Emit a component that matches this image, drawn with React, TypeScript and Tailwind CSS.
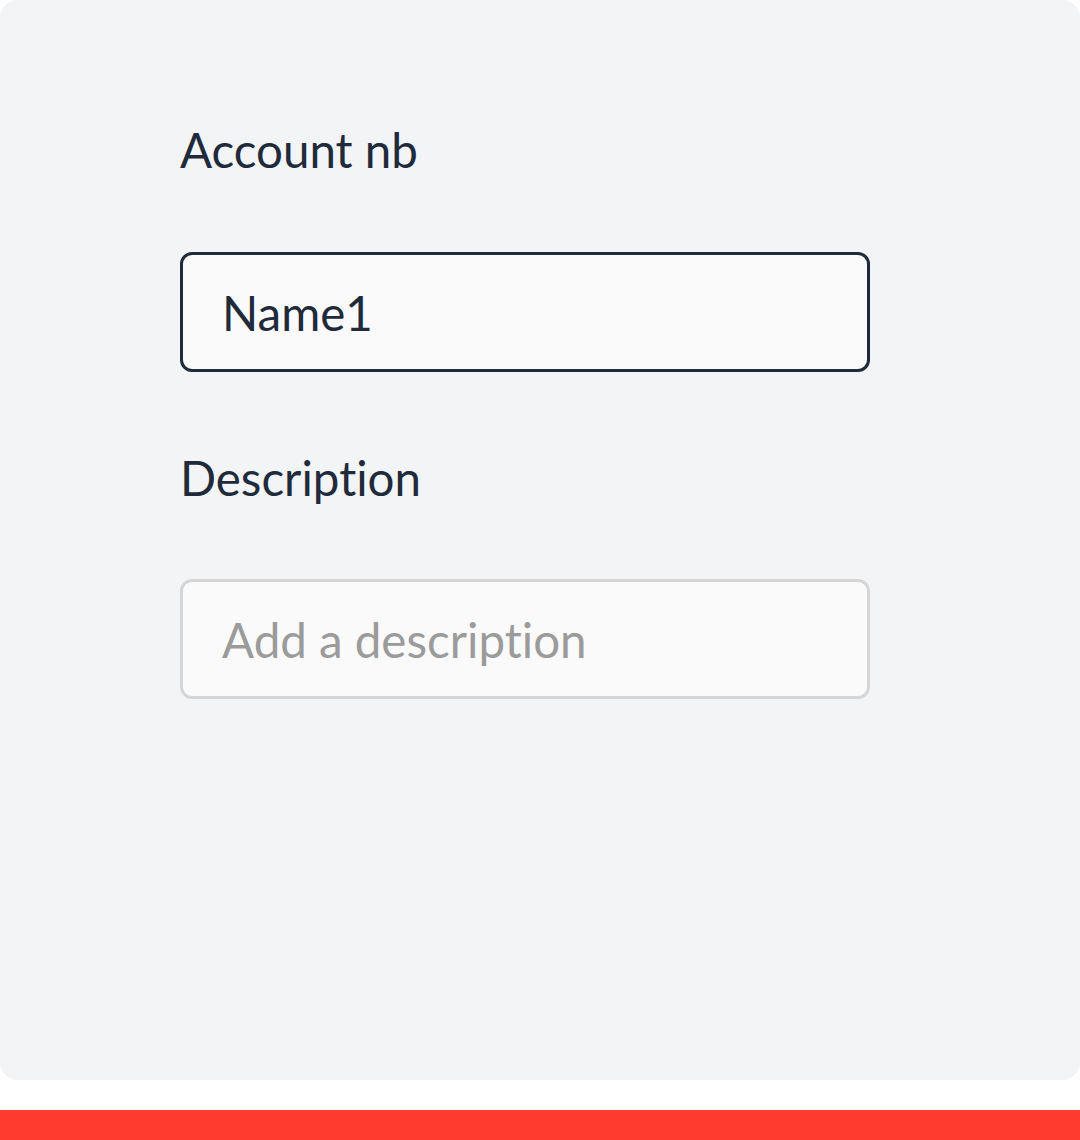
import React from "react";

const font = {
    fontFamily: "Lato, 'Noto Sans', sans-serif",
    fontVariantLigatures: "none",
};

// zero-width non-joiner keeps Lato from joining "ti"
const zwnj = "\u200C";

export default function App() {
    return (
        <div className="w-[1080px] h-[1140px] bg-white flex flex-col" style={font}>
            {/* Form panel */}
            <div className="h-[1080px] bg-[#f3f4f6] rounded-[18px] pl-[180px] pr-[210px] pt-[120px] flex flex-col">
                <label className="text-[47.5px] leading-[60px] text-[#1f2b3b]">Account nb</label>
                <input
                    className="mt-[72px] h-[120px] w-[690px] rounded-[12px] border-[3px] border-[#1f2b3b] bg-[#fafafa] pl-[39px] text-[47.5px] text-[#1f2b3b] outline-none"
                    defaultValue="Name1"
                    style={font}
                />
                <label className="mt-[76px] text-[47.5px] leading-[60px] text-[#1f2b3b]">{`Descript${zwnj}ion`}</label>
                <input
                    className="mt-[71px] h-[120px] w-[690px] rounded-[12px] border-[3px] border-[#d6d6d6] bg-[#fafafa] pl-[39px] text-[47.5px] text-[#1f2b3b] placeholder:text-[#9b9b9b] outline-none"
                    placeholder={`Add a descript${zwnj}ion`}
                    style={font}
                />
            </div>
            <div className="h-[30px]" />
            <div className="h-[30px] bg-[#ff3b30]" />
        </div>
    );
}
